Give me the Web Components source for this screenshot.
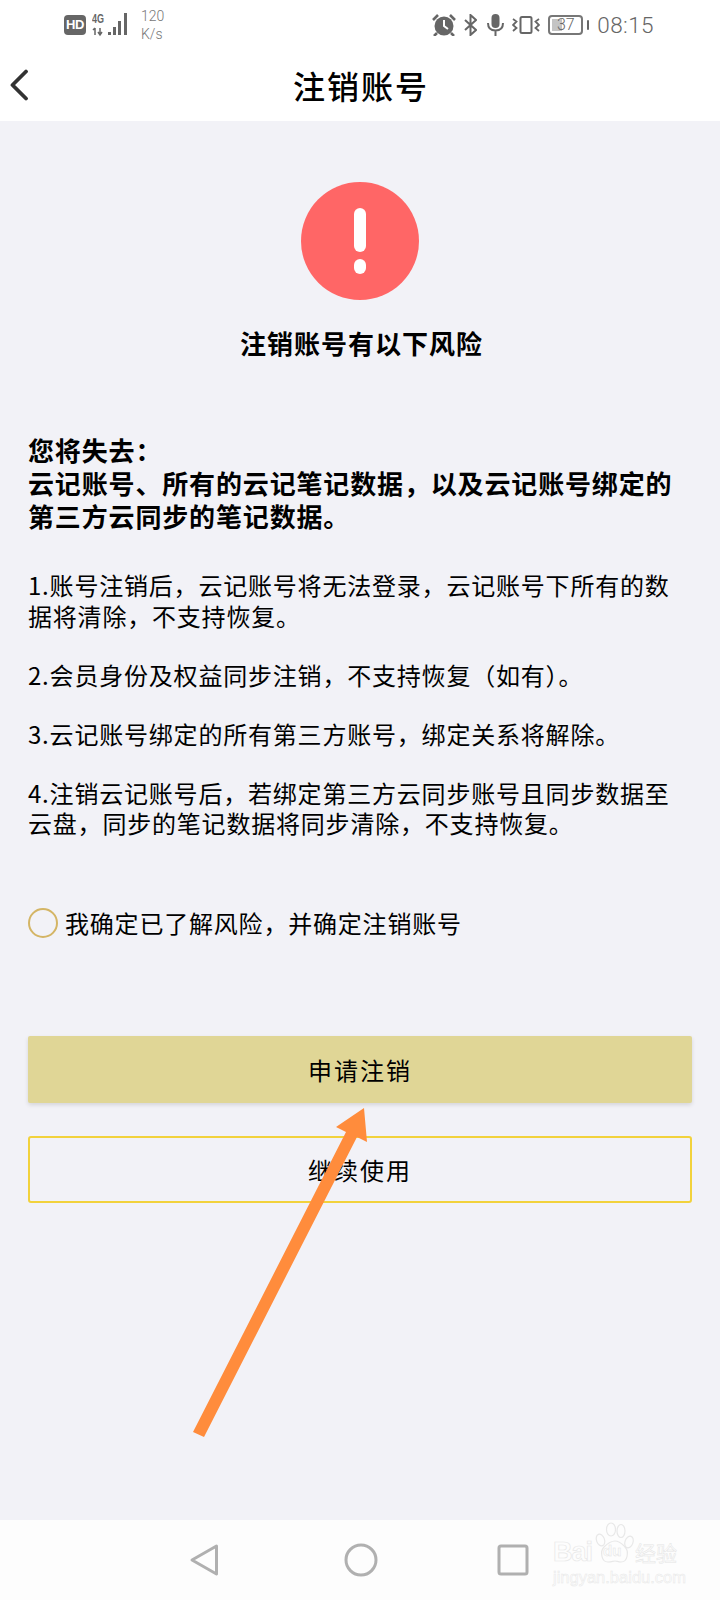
<!DOCTYPE html>
<html lang="zh">
<head>
<meta charset="utf-8">
<title>注销账号</title>
<style>
    html, body { margin: 0; padding: 0; }
    body {
        width: 720px;
        height: 1600px;
        overflow: hidden;
        position: relative;
        display: flex;
        flex-direction: column;
        background: #f2f2f7;
        color: #000;
        font-family: "Noto Sans CJK SC", "Liberation Sans", sans-serif;
    }
</style>
</head>
<body>
    <status-bar></status-bar>
    <app-header title-text="注销账号"></app-header>
    <risk-page>
        <warning-hero>注销账号有以下风险</warning-hero>
        <lost-summary>您将失去&#xFF1A;
云记账号&#x3001;所有的云记笔记数据&#xFF0C;以及云记账号绑定的第三方云同步的笔记数据&#x3002;</lost-summary>
        <risk-list>
            <p>1.账号注销后&#xFF0C;云记账号将无法登录&#xFF0C;云记账号下所有的数据将清除&#xFF0C;不支持恢复&#x3002;</p>
            <p>2.会员身份及权益同步注销&#xFF0C;不支持恢复&#xFF08;如有&#xFF09;&#x3002;</p>
            <p>3.云记账号绑定的所有第三方账号&#xFF0C;绑定关系将解除&#x3002;</p>
            <p>4.注销云记账号后&#xFF0C;若绑定第三方云同步账号且同步数据至云盘&#xFF0C;同步的笔记数据将同步清除&#xFF0C;不支持恢复&#x3002;</p>
        </risk-list>
        <confirm-row>我确定已了解风险&#xFF0C;并确定注销账号</confirm-row>
        <action-button kind="primary">申请注销</action-button>
        <action-button kind="outline">继续使用</action-button>
    </risk-page>
    <nav-bar></nav-bar>
    <guide-arrow></guide-arrow>

<script>
const FONT = '"Noto Sans CJK SC", "Liberation Sans", sans-serif';

class StatusBar extends HTMLElement {
    constructor() {
        super()
        this.attachShadow({ mode: 'open' })
        this.shadowRoot.innerHTML = `
        <style>
            :host{
                display:flex;
                align-items:center;
                justify-content:space-between;
                height:50px;
                padding:0 66px 0 64px;
                background:#fff;
                color:#666;
                font-family:Roboto, "Liberation Sans", sans-serif;
            }
            .group{ display:flex; align-items:center; }
            svg{ display:block; }
            .hd{
                width:22px;
                height:20px;
                border-radius:4px;
                background:#666;
                color:#fff;
                font:700 13px/20px "Liberation Sans", sans-serif;
                text-align:center;
                letter-spacing:-0.5px;
            }
            .speed{
                margin-left:7px;
                font-size:14px;
                font-weight:300;
                line-height:18px;
                width:24px;
                color:#777;
            }
            .battery{
                position:relative;
                box-sizing:border-box;
                width:35px;
                height:20px;
                margin-left:8px;
                border:2px solid #777;
                border-radius:4px;
                font-size:16px;
                font-weight:300;
                line-height:16px;
                text-align:center;
            }
            .battery i{
                position:absolute;
                left:2px;
                top:2px;
                bottom:2px;
                width:10px;
                background:#c4c4c4;
            }
            .battery span{ position:relative; }
            .nub{ width:2px; height:10px; margin-left:4px; background:#666; border-radius:1px; }
            .time{ margin-left:8px; font-size:22.500px; font-weight:300; letter-spacing:0.4px; line-height:28px; }
        </style>
        <div class="group">
            <div class="hd">HD</div>
            <svg width="42" height="24" viewBox="0 0 42 24" style="margin-left:6px">
                <text x="0" y="9.500" font-family="Liberation Sans" font-weight="700" font-size="12" textLength="12" lengthAdjust="spacingAndGlyphs" fill="#666">4G</text>
                <path d="M3 15v7M1 17l2-2M8 15v7M6 19l2 3 2-3" stroke="#666" stroke-width="1.500" fill="none"/>
                <rect x="16" y="19" width="3" height="3" fill="#666"/>
                <rect x="21" y="14" width="3" height="8" fill="#666"/>
                <rect x="26" y="8" width="3" height="14" fill="#666"/>
                <rect x="32" y="0" width="3" height="22" fill="#666"/>
            </svg>
            <div class="speed">120<br>K/s</div>
        </div>
        <div class="group">
            <svg width="24" height="22" viewBox="0 0 24 22">
                <circle cx="12" cy="12" r="9.500" fill="#666"/>
                <path d="M12 6v6l4 3" stroke="#fff" stroke-width="2" fill="none"/>
                <path d="M1 6l5-5M23 6l-5-5M5 19l-3 3M19 19l3 3" stroke="#666" stroke-width="2.600" fill="none"/>
            </svg>
            <svg width="13" height="22" viewBox="0 0 13 22" style="margin-left:8px">
                <path d="M1 6l11 10-5.500 5V1L12 6 1 16" stroke="#666" stroke-width="2" fill="none"/>
            </svg>
            <svg width="17" height="22" viewBox="0 0 17 22" style="margin-left:10px">
                <rect x="4.500" y="0" width="8" height="14" rx="4" fill="#666"/>
                <path d="M1 9c0 5 3 7.500 7.500 7.500S16 14 16 9M8.500 16.500V22" stroke="#666" stroke-width="2" fill="none"/>
            </svg>
            <svg width="28" height="18" viewBox="0 0 28 18" style="margin-left:8px">
                <rect x="8.500" y="1" width="11" height="16" rx="1.500" stroke="#666" stroke-width="2" fill="none"/>
                <path d="M1 3l3.500 2.500L1 9l3.500 3L1 15M27 3l-3.500 2.500L27 9l-3.500 3 3.500 3" stroke="#666" stroke-width="1.800" fill="none"/>
            </svg>
            <div class="battery"><i></i><span>37</span></div>
            <div class="nub"></div>
            <div class="time">08:15</div>
        </div>
        `
    }
}

class AppHeader extends HTMLElement {
    constructor() {
        super()
        this.attachShadow({ mode: 'open' })
        this.shadowRoot.innerHTML = `
        <style>
            :host{
                display:grid;
                grid-template-columns:60px 1fr 60px;
                align-items:center;
                height:71px;
                background:#fff;
            }
            svg{ display:block; margin:-1px 0 0 9px; }
            h1{
                margin:-2px 0 0 0;
                padding-left:2px;
                text-align:center;
                font-size:32px;
                font-weight:500;
                letter-spacing:2px;
                line-height:40px;
                font-family:${FONT};
                color:#000;
            }
        </style>
        <svg width="20" height="32" viewBox="0 0 20 32">
            <path d="M17 2.500L3.500 16 17 29.500" stroke="#333" stroke-width="3.800" fill="none" stroke-linecap="round" stroke-linejoin="round"/>
        </svg>
        <h1 id="title"></h1>
        <span></span>
        `
    }
    connectedCallback() {
        this.shadowRoot.getElementById('title').textContent = this.getAttribute('title-text')
    }
}

class RiskPage extends HTMLElement {
    constructor() {
        super()
        this.attachShadow({ mode: 'open' })
        this.shadowRoot.innerHTML = `
        <style>
            :host{
                display:flex;
                flex-direction:column;
                flex:1;
                box-sizing:border-box;
                padding:61px 28px 0 28px;
                background:#f2f2f7;
            }
        </style>
        <slot></slot>
        `
    }
}

class WarningHero extends HTMLElement {
    constructor() {
        super()
        this.attachShadow({ mode: 'open' })
        this.shadowRoot.innerHTML = `
        <style>
            :host{
                display:flex;
                flex-direction:column;
                align-items:center;
            }
            .circle{
                display:flex;
                flex-direction:column;
                align-items:center;
                box-sizing:border-box;
                width:118px;
                height:118px;
                padding-top:26px;
                border-radius:50%;
                background:#ff6666;
            }
            .bar{ width:12px; height:44px; border-radius:6px; background:#fff; }
            .dot{ width:12px; height:15px; margin-top:7px; border-radius:6px; background:#fff; }
            .text{
                margin-top:26px;
                padding-left:3px;
                font-size:26px;
                font-weight:700;
                line-height:34px;
                letter-spacing:1px;
            }
        </style>
        <div class="circle"><div class="bar"></div><div class="dot"></div></div>
        <div class="text"><slot></slot></div>
        `
    }
}

class LostSummary extends HTMLElement {
    constructor() {
        super()
        this.attachShadow({ mode: 'open' })
        this.shadowRoot.innerHTML = `
        <style>
            :host{
                display:block;
                margin-top:73px;
                font-size:26px;
                font-weight:700;
                line-height:33px;
                letter-spacing:0.85px;
            }
            .lines{ white-space:pre-line; }
        </style>
        <div class="lines"><slot></slot></div>
        `
    }
}

class RiskList extends HTMLElement {
    constructor() {
        super()
        this.attachShadow({ mode: 'open' })
        this.shadowRoot.innerHTML = `
        <style>
            :host{
                display:flex;
                flex-direction:column;
                gap:28.500px;
                margin-top:38px;
                font-size:24px;
                line-height:30.500px;
                letter-spacing:0.8px;
            }
            ::slotted(p){ margin:0; }
        </style>
        <slot></slot>
        `
    }
}

class ConfirmRow extends HTMLElement {
    constructor() {
        super()
        this.attachShadow({ mode: 'open' })
        this.shadowRoot.innerHTML = `
        <style>
            :host{
                display:flex;
                align-items:center;
                gap:7px;
                height:30px;
                margin-top:69px;
                font-size:24px;
                line-height:30px;
                letter-spacing:0.8px;
            }
            .radio{
                box-sizing:border-box;
                width:30px;
                height:30px;
                border:2px solid #d4b565;
                border-radius:50%;
            }
        </style>
        <div class="radio"></div>
        <span><slot></slot></span>
        `
    }
}

class ActionButton extends HTMLElement {
    constructor() {
        super()
        this.attachShadow({ mode: 'open' })
        this.shadowRoot.innerHTML = `
        <style>
            :host{
                display:flex;
                align-items:center;
                justify-content:center;
                box-sizing:border-box;
                height:67px;
                font-size:24px;
                letter-spacing:2px;
                border-radius:2px;
            }
            :host([kind="primary"]){
                margin-top:98px;
                background:#e0d696;
                box-shadow:0 2px 4px rgba(0,0,0,0.12);
            }
            :host([kind="outline"]){
                margin-top:33px;
                border:2px solid #f2d23c;
                border-radius:3px;
            }
        </style>
        <slot></slot>
        `
    }
}

class NavBar extends HTMLElement {
    constructor() {
        super()
        this.attachShadow({ mode: 'open' })
        this.shadowRoot.innerHTML = `
        <style>
            :host{
                display:flex;
                align-items:center;
                position:relative;
                box-sizing:border-box;
                height:80px;
                padding-left:189px;
                background:#fdfdfd;
            }
            svg{ display:block; }
            .mark{
                position:absolute;
                left:552px;
                top:0;
                width:132px;
                height:68px;
                color:#fdfdfd;
                -webkit-text-stroke:0.7px #e8e8e8;
                font-family:"Liberation Sans", sans-serif;
            }
            .mark span{ position:absolute; white-space:nowrap; }
            .bai{ left:1px; top:17px; font-size:27px; font-weight:700; line-height:30px; letter-spacing:-1px; }
            .du{ left:51px; top:22px; font-size:15px; font-weight:700; line-height:18px; -webkit-text-stroke:0.5px #e4e4e4; }
            .jy{ left:83px; top:20px; font-size:21px; line-height:24px; font-family:${FONT}; -webkit-text-stroke:0.5px #e4e4e4; }
            .url{ left:1px; top:48px; font-size:16.500px; line-height:18px; -webkit-text-stroke:0.5px #e8e8e8; }
        </style>
        <svg width="30" height="34" viewBox="0 0 30 34" style="margin-right:125px">
            <path d="M27.500 3L3 17l24.500 14z" stroke="#b0b0b0" stroke-width="3" fill="none" stroke-linejoin="round"/>
        </svg>
        <svg width="34" height="34" viewBox="0 0 34 34" style="margin-right:119px">
            <circle cx="17" cy="17" r="15" stroke="#b0b0b0" stroke-width="3" fill="none"/>
        </svg>
        <svg width="32" height="32" viewBox="0 0 32 32">
            <rect x="2" y="2" width="28" height="28" rx="2" stroke="#b0b0b0" stroke-width="3" fill="none"/>
        </svg>
        <div class="mark">
            <svg width="132" height="50" viewBox="0 0 132 50" style="position:absolute;left:0;top:0">
                <g fill="#fdfdfd" stroke="#e8e8e8" stroke-width="1.200">
                    <ellipse cx="48.500" cy="20" rx="4" ry="6" transform="rotate(-20 48.500 20)"/>
                    <ellipse cx="59" cy="9.500" rx="4.500" ry="6.500"/>
                    <ellipse cx="69" cy="11" rx="4" ry="6.500"/>
                    <ellipse cx="77" cy="22" rx="4" ry="6" transform="rotate(20 77 22)"/>
                    <path d="M63 21c5 0 7 3 10 6 4 4 3 15-4 15-3 0-4-1-6-1s-3 1-7 1c-7 0-8-11-4-15 3-3 6-6 11-6z"/>
                </g>
            </svg>
            <span class="bai">Bai</span>
            <span class="du">du</span>
            <span class="jy">经验</span>
            <span class="url">jingyan.baidu.com</span>
        </div>
        `
    }
}

class GuideArrow extends HTMLElement {
    constructor() {
        super()
        this.attachShadow({ mode: 'open' })
        this.shadowRoot.innerHTML = `
        <style>
            :host{
                display:block;
                position:absolute;
                left:180px;
                top:1100px;
                width:200px;
                height:345px;
                pointer-events:none;
            }
            svg{ display:block; }
        </style>
        <svg width="200" height="345" viewBox="180 1100 200 345">
            <path d="M364 1108L336 1127 346 1132 193 1432 204 1437 357 1137 367 1142z" fill="#ff8c3c"/>
        </svg>
        `
    }
}

customElements.define('status-bar', StatusBar);
customElements.define('app-header', AppHeader);
customElements.define('risk-page', RiskPage);
customElements.define('warning-hero', WarningHero);
customElements.define('lost-summary', LostSummary);
customElements.define('risk-list', RiskList);
customElements.define('confirm-row', ConfirmRow);
customElements.define('action-button', ActionButton);
customElements.define('nav-bar', NavBar);
customElements.define('guide-arrow', GuideArrow);
</script>
</body>
</html>
